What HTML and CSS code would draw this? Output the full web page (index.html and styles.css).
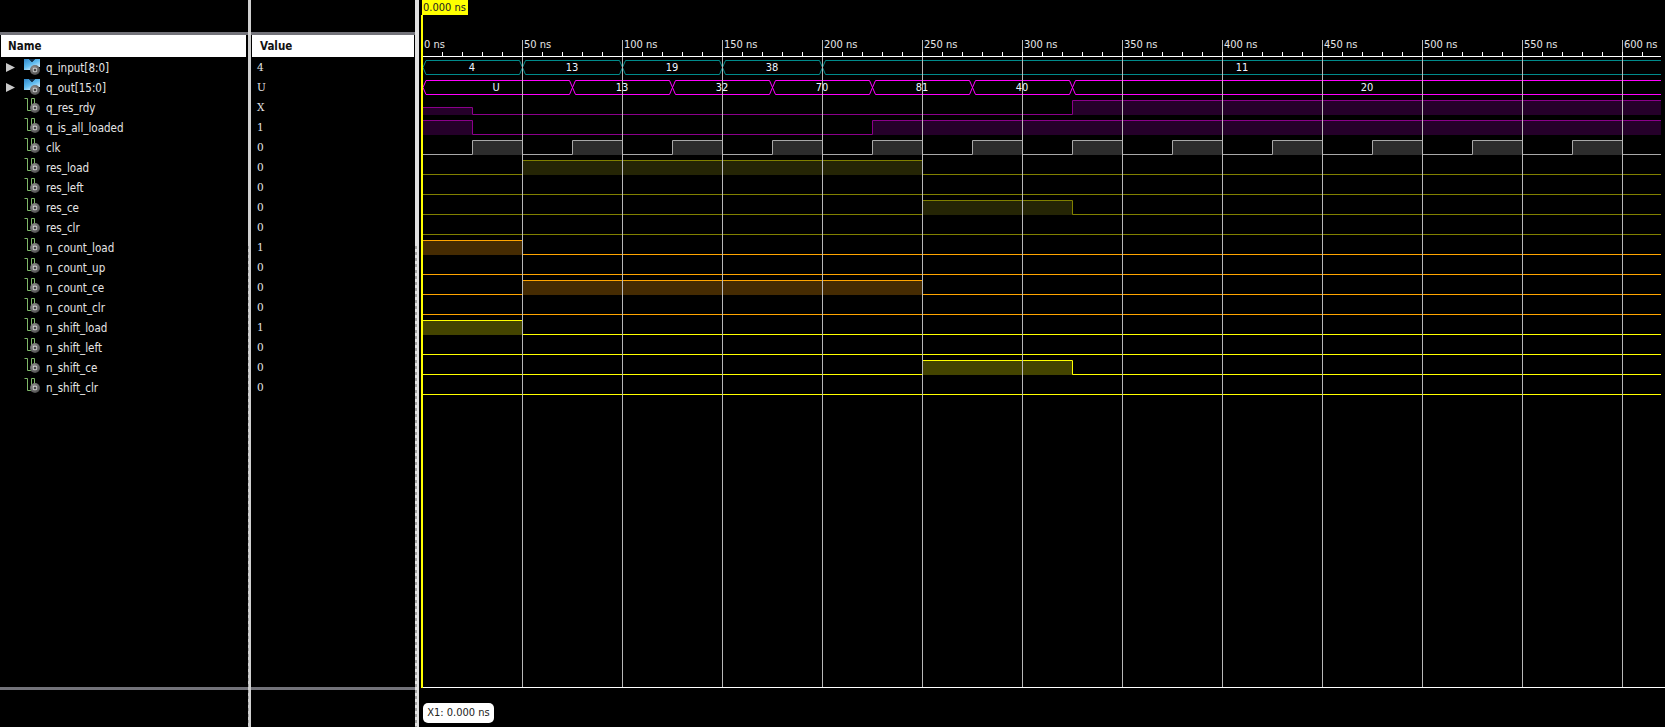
FILE: index.html
```html
<!DOCTYPE html>
<html lang="en">
<head>
    <meta charset="UTF-8">
    <title>ISim waveform</title>
    <link rel="stylesheet" href="styles.css">
</head>
<body>
    <svg class="defs" width="0" height="0">
        <defs>
            <linearGradient id="busBlue" x1="0" y1="0" x2="0.7" y2="1">
                <stop offset="0" stop-color="#2f86c8"/>
                <stop offset="0.55" stop-color="#62bdf0"/>
                <stop offset="1" stop-color="#e4f3fc"/>
            </linearGradient>
            <radialGradient id="gearFill" cx="0.4" cy="0.35" r="0.8">
                <stop offset="0" stop-color="#9a9a9a"/>
                <stop offset="1" stop-color="#3c3c3c"/>
            </radialGradient>
            <g id="gear">
                <circle cx="11" cy="11" r="5" fill="url(#gearFill)"/>
                <circle cx="11" cy="11" r="2.2" fill="#e8e8e8"/>
                <path d="M11 9.5v3M9.5 11h3" stroke="#111" stroke-width="1"/>
            </g>
            <symbol id="icoBus" viewBox="0 0 16 16">
                <path d="M0 0h5l3 3 3-3h5v8H8v3H0z" fill="url(#busBlue)"/>
                <path d="M5 0l3 3 3-3z" fill="#0c2c48"/>
                <use href="#gear"/>
            </symbol>
            <symbol id="icoSig" viewBox="0 0 16 16">
                <path d="M0.5 1.5h3v12h4v-12h3v9" fill="none" stroke="#7fb868" stroke-width="1"/>
                <use href="#gear"/>
            </symbol>
        </defs>
    </svg>

    <div class="app">
        <div class="pane pane-names">
            <div class="pane-top"></div>
            <div class="pane-head">Name</div>
            <div class="rows">
                <div class="row"><svg class="arrow" viewBox="0 0 9 9"><path d="M0 0l9 4.5L0 9z" fill="#c8c8c8"/></svg><svg class="ico"><use href="#icoBus"/></svg><span>q_input[8:0]</span></div>
                <div class="row"><svg class="arrow" viewBox="0 0 9 9"><path d="M0 0l9 4.5L0 9z" fill="#c8c8c8"/></svg><svg class="ico"><use href="#icoBus"/></svg><span>q_out[15:0]</span></div>
                <div class="row leaf"><svg class="ico"><use href="#icoSig"/></svg><span>q_res_rdy</span></div>
                <div class="row leaf"><svg class="ico"><use href="#icoSig"/></svg><span>q_is_all_loaded</span></div>
                <div class="row leaf"><svg class="ico"><use href="#icoSig"/></svg><span>clk</span></div>
                <div class="row leaf"><svg class="ico"><use href="#icoSig"/></svg><span>res_load</span></div>
                <div class="row leaf"><svg class="ico"><use href="#icoSig"/></svg><span>res_left</span></div>
                <div class="row leaf"><svg class="ico"><use href="#icoSig"/></svg><span>res_ce</span></div>
                <div class="row leaf"><svg class="ico"><use href="#icoSig"/></svg><span>res_clr</span></div>
                <div class="row leaf"><svg class="ico"><use href="#icoSig"/></svg><span>n_count_load</span></div>
                <div class="row leaf"><svg class="ico"><use href="#icoSig"/></svg><span>n_count_up</span></div>
                <div class="row leaf"><svg class="ico"><use href="#icoSig"/></svg><span>n_count_ce</span></div>
                <div class="row leaf"><svg class="ico"><use href="#icoSig"/></svg><span>n_count_clr</span></div>
                <div class="row leaf"><svg class="ico"><use href="#icoSig"/></svg><span>n_shift_load</span></div>
                <div class="row leaf"><svg class="ico"><use href="#icoSig"/></svg><span>n_shift_left</span></div>
                <div class="row leaf"><svg class="ico"><use href="#icoSig"/></svg><span>n_shift_ce</span></div>
                <div class="row leaf"><svg class="ico"><use href="#icoSig"/></svg><span>n_shift_clr</span></div>
            </div>
            <div class="pane-foot"></div>
        </div>
        <div class="split"></div>
        <div class="pane pane-values">
            <div class="pane-top"></div>
            <div class="pane-head">Value</div>
            <div class="rows">
                <div class="row val">4</div>
                <div class="row val">U</div>
                <div class="row val">X</div>
                <div class="row val">1</div>
                <div class="row val">0</div>
                <div class="row val">0</div>
                <div class="row val">0</div>
                <div class="row val">0</div>
                <div class="row val">0</div>
                <div class="row val">1</div>
                <div class="row val">0</div>
                <div class="row val">0</div>
                <div class="row val">0</div>
                <div class="row val">1</div>
                <div class="row val">0</div>
                <div class="row val">0</div>
                <div class="row val">0</div>
            </div>
            <div class="pane-foot"></div>
        </div>
        <div class="split split-wide"></div>
        <div class="wave">
            <!-- viewBox keeps the screen x so the 50 ns = 100 px grid reads directly -->
            <svg class="wave-svg" viewBox="419 0 1246 727">
                <!-- fills -->
                <rect class="f-purple" x="423" y="108" width="49" height="7"/>
                <rect class="f-purple" x="1073" y="101" width="588" height="14"/>
                <rect class="f-purple" x="423" y="121" width="49" height="14"/>
                <rect class="f-purple" x="873" y="121" width="788" height="14"/>

                <rect class="f-gray" x="473" y="141" width="50" height="14"/>
                <rect class="f-gray" x="573" y="141" width="50" height="14"/>
                <rect class="f-gray" x="673" y="141" width="50" height="14"/>
                <rect class="f-gray" x="773" y="141" width="50" height="14"/>
                <rect class="f-gray" x="873" y="141" width="50" height="14"/>
                <rect class="f-gray" x="973" y="141" width="50" height="14"/>
                <rect class="f-gray" x="1073" y="141" width="50" height="14"/>
                <rect class="f-gray" x="1173" y="141" width="50" height="14"/>
                <rect class="f-gray" x="1273" y="141" width="50" height="14"/>
                <rect class="f-gray" x="1373" y="141" width="50" height="14"/>
                <rect class="f-gray" x="1473" y="141" width="50" height="14"/>
                <rect class="f-gray" x="1573" y="141" width="50" height="14"/>

                <rect class="f-olive" x="523" y="161" width="400" height="14"/>
                <rect class="f-olive" x="923" y="201" width="150" height="14"/>
                <rect class="f-orange" x="423" y="241" width="99" height="14"/>
                <rect class="f-orange" x="523" y="281" width="400" height="14"/>
                <rect class="f-yellow" x="423" y="321" width="99" height="14"/>
                <rect class="f-yellow" x="923" y="361" width="150" height="14"/>

                <!-- buses -->
                <path class="w-teal" d="M423 67.5L426 60.5H519.5L525.5 74.5H619.5L625.5 60.5H719.5L725.5 74.5H819.5L825.5 60.5H1661"/>
                <path class="w-teal" d="M423 67.5L426 74.5H519.5L525.5 60.5H619.5L625.5 74.5H719.5L725.5 60.5H819.5L825.5 74.5H1661"/>
                <path class="w-magenta" d="M423 87.5L426 80.5H569.5L575.5 94.5H669.5L675.5 80.5H769.5L775.5 94.5H869.5L875.5 80.5H969.5L975.5 94.5H1069.5L1075.5 80.5H1661"/>
                <path class="w-magenta" d="M423 87.5L426 94.5H569.5L575.5 80.5H669.5L675.5 94.5H769.5L775.5 80.5H869.5L875.5 94.5H969.5L975.5 80.5H1069.5L1075.5 94.5H1661"/>

                <!-- single bit signals -->
                <path class="w-purple" d="M423 107.5H472.5V114.5H1072.5V100.5H1661"/>
                <path class="w-purple" d="M423 120.5H472.5V134.5H872.5V120.5H1661"/>
                <path class="w-gray" d="M423 154.5H472.5V140.5H522.5V154.5H572.5V140.5H622.5V154.5H672.5V140.5H722.5V154.5H772.5V140.5H822.5V154.5H872.5V140.5H922.5V154.5H972.5V140.5H1022.5V154.5H1072.5V140.5H1122.5V154.5H1172.5V140.5H1222.5V154.5H1272.5V140.5H1322.5V154.5H1372.5V140.5H1422.5V154.5H1472.5V140.5H1522.5V154.5H1572.5V140.5H1622.5V154.5H1661"/>
                <path class="w-olive" d="M423 174.5H522.5V160.5H922.5V174.5H1661"/>
                <path class="w-olive" d="M423 194.5H1661"/>
                <path class="w-olive" d="M423 214.5H922.5V200.5H1072.5V214.5H1661"/>
                <path class="w-olive" d="M423 234.5H1661"/>
                <path class="w-orange" d="M423 240.5H522.5V254.5H1661"/>
                <path class="w-orange" d="M423 274.5H1661"/>
                <path class="w-orange" d="M423 294.5H522.5V280.5H922.5V294.5H1661"/>
                <path class="w-orange" d="M423 314.5H1661"/>
                <path class="w-yellow" d="M423 320.5H522.5V334.5H1661"/>
                <path class="w-yellow" d="M423 354.5H1661"/>
                <path class="w-yellow" d="M423 374.5H922.5V360.5H1072.5V374.5H1661"/>
                <path class="w-yellow" d="M423 394.5H1661"/>

                <!-- time grid -->
                <path class="grid" d="M522.5 40V687M622.5 40V687M722.5 40V687M822.5 40V687M922.5 40V687M1022.5 40V687M1122.5 40V687M1222.5 40V687M1322.5 40V687M1422.5 40V687M1522.5 40V687M1622.5 40V687M422.5 40V56"/>
                <path class="ticks" d="M422 54H1661"/>
                <path class="axis" d="M423 56.5H1661"/>
                <path class="axis" d="M423 687.5H1665"/>
                <rect class="cursor" x="421" y="15" width="2" height="673"/>

                <text class="tlabel" x="424" y="48">0 ns</text>
                <text class="tlabel" x="524" y="48">50 ns</text>
                <text class="tlabel" x="624" y="48">100 ns</text>
                <text class="tlabel" x="724" y="48">150 ns</text>
                <text class="tlabel" x="824" y="48">200 ns</text>
                <text class="tlabel" x="924" y="48">250 ns</text>
                <text class="tlabel" x="1024" y="48">300 ns</text>
                <text class="tlabel" x="1124" y="48">350 ns</text>
                <text class="tlabel" x="1224" y="48">400 ns</text>
                <text class="tlabel" x="1324" y="48">450 ns</text>
                <text class="tlabel" x="1424" y="48">500 ns</text>
                <text class="tlabel" x="1524" y="48">550 ns</text>
                <text class="tlabel" x="1624" y="48">600 ns</text>

                <text class="blabel" x="472" y="71">4</text>
                <text class="blabel" x="572" y="71">13</text>
                <text class="blabel" x="672" y="71">19</text>
                <text class="blabel" x="772" y="71">38</text>
                <text class="blabel" x="1242" y="71">11</text>
                <text class="blabel" x="496" y="91">U</text>
                <text class="blabel" x="622" y="91">13</text>
                <text class="blabel" x="722" y="91">32</text>
                <text class="blabel" x="822" y="91">70</text>
                <text class="blabel" x="922" y="91">81</text>
                <text class="blabel" x="1022" y="91">40</text>
                <text class="blabel" x="1367" y="91">20</text>
            </svg>
            <span class="marker-time">0.000 ns</span>
            <span class="marker-x1">X1: 0.000 ns</span>
        </div>
    </div>
</body>
</html>
```
FILE: styles.css
```css
html, body {
    margin: 0;
    height: 100%;
    background: #000;
    overflow: hidden;
}

.defs {
    position: absolute;
}

.app {
    display: flex;
    height: 727px;
    font-family: "DejaVu Sans Condensed", "DejaVu Sans", sans-serif;
    font-size: 11.5px;
    color: #e6e6e6;
}

.pane {
    display: flex;
    flex-direction: column;
}

.pane-names {
    width: 248px;
}

.pane-values {
    width: 164px;
}

.split {
    width: 3px;
    background: repeating-linear-gradient(#a4a4a4 0 3px, transparent 3px 6px) no-repeat 0 246px / 1px 100%, #d0d0d0;
}

.split-wide {
    width: 4px;
    background: repeating-linear-gradient(#a4a4a4 0 3px, transparent 3px 6px) no-repeat 0 246px / 2px 100%, #e2e2e2;
}

.pane-top {
    height: 32px;
    border-bottom: 3px solid #73737a;
}

.pane-head {
    height: 22px;
    line-height: 22px;
    margin: 0 2px 0 1px;
    padding-left: 7px;
    background: #fff;
    color: #111;
    font-weight: bold;
}

.pane-values .pane-head {
    padding-left: 8px;
    margin-right: 1px;
}

.rows {
    flex: 1;
}

.row {
    display: flex;
    align-items: center;
    height: 20px;
    padding-left: 6px;
    box-sizing: border-box;
}

.row span {
    padding-top: 2px;
}

.row.leaf {
    padding-left: 24px;
}

.val {
    font-family: "DejaVu Serif", serif;
    font-size: 10.5px;
}

.arrow {
    width: 9px;
    height: 9px;
    margin-right: 9px;
}

.ico {
    width: 16px;
    height: 16px;
    margin-right: 6px;
}

.leaf .ico {
    margin-bottom: 4px;
}

.pane-foot {
    height: 37px;
    border-top: 3px solid #73737a;
}

.wave {
    position: relative;
    flex: 1;
    font-size: 11px;
}

.wave-svg {
    display: block;
    width: 1246px;
    height: 727px;
}

.wave-svg path {
    fill: none;
    stroke-width: 1;
}

.f-purple { fill: #25002a; }
.f-gray { fill: #2c2c2c; }
.f-olive { fill: #252505; }
.f-orange { fill: #452b02; }
.f-yellow { fill: #444400; }

.w-teal { stroke: #008b8b; }
.w-magenta { stroke: #ff00ff; }
.w-purple { stroke: #8b008b; }
.w-gray { stroke: #a8a8a8; }
.w-olive { stroke: #808000; }
.w-orange { stroke: #ffa500; }
.w-yellow { stroke: #ffff00; }

.wave-svg .grid { stroke: #b8b8b8; }
.wave-svg .axis { stroke: #fff; }
.wave-svg .ticks {
    stroke: #fff;
    stroke-width: 4;
    stroke-dasharray: 1 19;
}

.cursor { fill: #ffff00; }

.tlabel {
    font-size: 11px;
    fill: #e6e6e6;
}

.blabel {
    font-size: 11px;
    fill: #eef4ff;
    text-anchor: middle;
}

.marker-time {
    position: absolute;
    left: 3px;
    top: 0;
    width: 45px;
    height: 15px;
    padding-left: 1px;
    line-height: 15px;
    background: #ffff00;
    color: #222;
}

.marker-x1 {
    position: absolute;
    left: 4px;
    top: 703px;
    width: 71px;
    height: 20px;
    line-height: 20px;
    text-align: center;
    background: #fff;
    color: #222;
    border-radius: 5px;
}
```
